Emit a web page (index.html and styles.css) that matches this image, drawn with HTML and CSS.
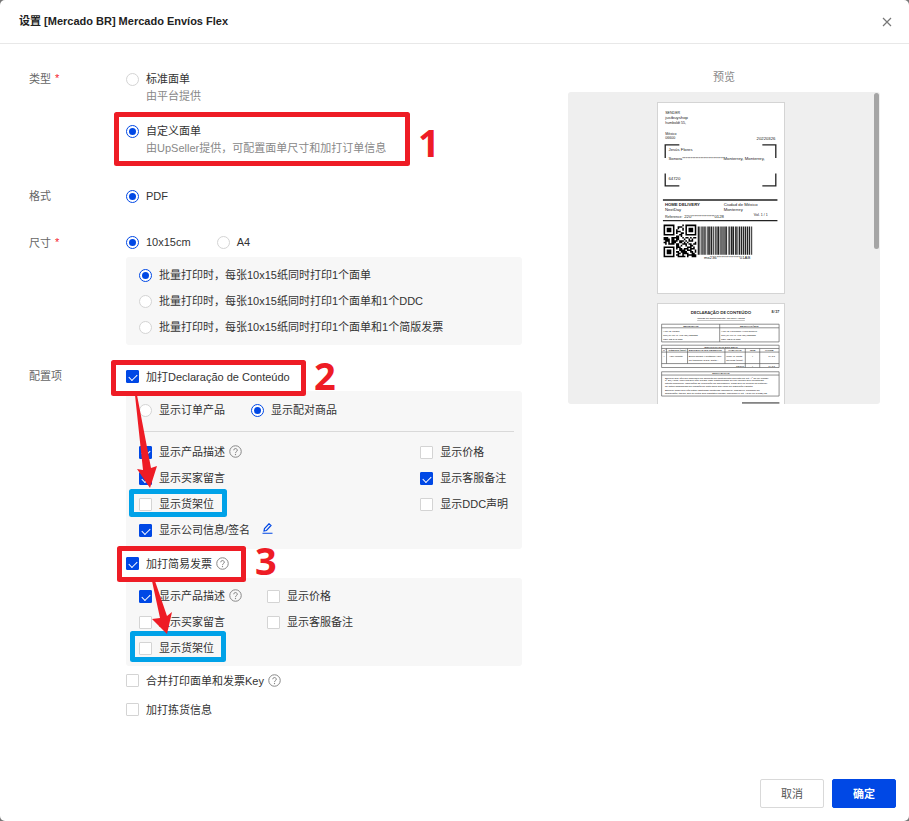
FILE: index.html
```html
<!DOCTYPE html>
<html lang="zh-CN">
<head>
    <meta charset="UTF-8">
    <meta name="viewport" content="width=device-width, initial-scale=1.0">
    <title>设置 [Mercado BR] Mercado Envíos Flex</title>
    <link rel="stylesheet" href="styles.css">
</head>
<body>
    <!-- Shared icons -->
    <svg class="icon-defs" aria-hidden="true">
        <symbol id="icon-help" viewBox="0 0 26 26">
            <circle cx="13" cy="13" r="11.5" fill="none" stroke="#888" stroke-width="2"/>
            <path d="M9.5 10.5a3.5 3.5 0 1 1 5 3.2c-1 .5-1.5 1-1.5 2.300" fill="none" stroke="#888" stroke-width="2"/>
            <circle cx="13" cy="19" r="1.300" fill="#888"/>
        </symbol>
    </svg>

    <div class="dialog">
        <header class="dialog-header">
            <h1>设置 [Mercado BR] Mercado Envíos Flex</h1>
            <button type="button" class="close-button" aria-label="关闭">
                <svg viewBox="0 0 10 10" width="10" height="10"><path d="M1 1l8 8M9 1L1 9" stroke="#777" stroke-width="1.200" fill="none"/></svg>
            </button>
        </header>

        <div class="dialog-body">
            <form class="settings" id="settings">
                <div class="field">
                    <div class="field-label field-label-type">类型<span class="required">*</span></div>
                    <div class="field-content">
                        <label class="type-option">
                            <input type="radio" name="type">
                            <span><span class="type-name">标准面单</span><span class="type-hint">由平台提供</span></span>
                        </label>
                        <label class="type-option">
                            <input type="radio" name="type" checked>
                            <span><span class="type-name">自定义面单</span><span class="type-hint">由UpSeller提供，可配置面单尺寸和加打订单信息</span></span>
                        </label>
                    </div>
                </div>

                <div class="field">
                    <div class="field-label">格式</div>
                    <div class="field-content">
                        <div class="row"><label class="option"><input type="radio" name="format" checked>PDF</label></div>
                    </div>
                </div>

                <div class="field">
                    <div class="field-label">尺寸<span class="required">*</span></div>
                    <div class="field-content">
                        <div class="row">
                            <label class="option"><input type="radio" name="size" checked>10x15cm</label>
                            <label class="option"><input type="radio" name="size">A4</label>
                        </div>
                        <div class="panel">
                            <label class="option"><input type="radio" name="batch" checked>批量打印时，每张10x15纸同时打印1个面单</label>
                            <label class="option"><input type="radio" name="batch">批量打印时，每张10x15纸同时打印1个面单和1个DDC</label>
                            <label class="option"><input type="radio" name="batch">批量打印时，每张10x15纸同时打印1个面单和1个简版发票</label>
                        </div>
                    </div>
                </div>

                <div class="field">
                    <div class="field-label">配置项</div>
                    <div class="field-content">
                        <div class="row"><label class="option"><input type="checkbox" checked>加打Declaração de Conteúdo</label></div>
                        <div class="panel panel-ddc">
                            <div class="source">
                                <label class="option"><input type="radio" name="source">显示订单产品</label>
                                <label class="option"><input type="radio" name="source" checked>显示配对商品</label>
                            </div>
                            <div class="checks checks-wide">
                                <div class="check"><label class="option"><input type="checkbox" checked>显示产品描述</label><svg class="help"><use href="#icon-help"/></svg></div>
                                <div class="check"><label class="option"><input type="checkbox">显示价格</label></div>
                                <div class="check"><label class="option"><input type="checkbox" checked>显示买家留言</label></div>
                                <div class="check"><label class="option"><input type="checkbox" checked>显示客服备注</label></div>
                                <div class="check"><label class="option"><input type="checkbox">显示货架位</label></div>
                                <div class="check"><label class="option"><input type="checkbox">显示DDC声明</label></div>
                                <div class="check">
                                    <label class="option"><input type="checkbox" checked>显示公司信息/签名</label>
                                    <button type="button" class="edit-button" aria-label="编辑">
                                        <svg viewBox="0 0 22 22" width="11" height="11"><path d="M1 20.500h20M4 16l1-5L14 1.500l4 3.500L9 15z" fill="none" stroke="#0048e5" stroke-width="2.400"/></svg>
                                    </button>
                                </div>
                            </div>
                        </div>

                        <div class="row check"><label class="option"><input type="checkbox" checked>加打简易发票</label><svg class="help"><use href="#icon-help"/></svg></div>
                        <div class="panel">
                            <div class="checks checks-narrow">
                                <div class="check"><label class="option"><input type="checkbox" checked>显示产品描述</label><svg class="help"><use href="#icon-help"/></svg></div>
                                <div class="check"><label class="option"><input type="checkbox">显示价格</label></div>
                                <div class="check"><label class="option"><input type="checkbox">显示买家留言</label></div>
                                <div class="check"><label class="option"><input type="checkbox">显示客服备注</label></div>
                                <div class="check"><label class="option"><input type="checkbox">显示货架位</label></div>
                            </div>
                        </div>

                        <div class="row check"><label class="option"><input type="checkbox">合并打印面单和发票Key</label><svg class="help"><use href="#icon-help"/></svg></div>
                        <div class="row"><label class="option"><input type="checkbox">加打拣货信息</label></div>
                    </div>
                </div>
            </form>

            <aside class="preview">
                <h2>预览</h2>
                <div class="preview-box">
                    <div class="preview-pages">
                        <!-- Shipping label -->
                        <svg class="page" viewBox="0 0 384 576">
                            <g font-size="13">
                                <text x="22" y="31" font-size="11">SENDER</text>
                                <text x="22" y="46">justbuyshop</text>
                                <text x="22" y="62" font-size="11">humboldt 55,</text>
                                <text x="22" y="95" font-size="11">México</text>
                                <text x="22" y="108" font-size="11">06600</text>
                                <text x="358" y="110" text-anchor="end">20220326</text>
                                <text x="32" y="145">Jesús Flores</text>
                                <text x="32" y="171">Sonora*************************Monterrey, Monterrey,</text>
                                <text x="32" y="233">64720</text>
                                <text x="21" y="311" font-weight="bold">HOME DELIVERY</text>
                                <text x="200" y="311">Ciudad de México</text>
                                <text x="21" y="328">NextDay</text>
                                <text x="200" y="328">Monterrey</text>
                                <text x="21" y="348" font-size="11">Reference:</text>
                                <text x="80" y="348">220**************0128</text>
                                <text x="292" y="344" font-size="11">Vol. 1 / 1</text>
                                <text x="140" y="475">mx236**************01AB</text>
                            </g>
                            <path d="M65 126H22v40M318 126h41v40M22 213v38h43M359 213v38h-41" fill="none" stroke="#222" stroke-width="4"/>
                            <path d="M15 294h349M15 357h349" stroke="#222" stroke-width="4"/>
                            <path id="qr" fill="#000"/>
                            <path id="barcode" fill="#222"/>
                        </svg>

                        <!-- Content declaration -->
                        <svg class="page page-declaration" viewBox="0 0 384 576">
                            <path d="M11 60h358v54H11zM11 71h358M188 60v54M11 124h358v68H11zM11 134h358M11 145h358M11 180h358M26 134v46M90 134v46M204 134v46M266 134v58M310 134v58M11 205h358v74H11zM11 215h358" fill="none" stroke="#555" stroke-width="2"/>
                            <g font-size="8" font-weight="bold">
                                <text x="192" y="29" font-size="13" text-anchor="middle">DECLARAÇÃO DE CONTEÚDO</text>
                                <text x="346" y="26" font-size="11">8/37</text>
                                <text x="100" y="69" text-anchor="middle">REMETENTE</text>
                                <text x="278" y="69" text-anchor="middle">DESTINATÁRIO</text>
                                <text x="192" y="132" text-anchor="middle">IDENTIFICAÇÃO DOS BENS</text>
                                <text x="15" y="143">Nº</text>
                                <text x="32" y="143">CÓDIGO (SKU)</text>
                                <text x="94" y="143">DESCRIÇÃO DO PRODUTO</text>
                                <text x="214" y="143">VARIAÇÃO</text>
                                <text x="280" y="143">QTD</text>
                                <text x="326" y="143">VALOR</text>
                                <text x="238" y="190">TOTAL</text>
                                <text x="192" y="213" text-anchor="middle">DECLARAÇÃO</text>
                            </g>
                            <g font-size="8">
                                <text x="192" y="45" text-anchor="middle" text-decoration="underline">Código de Rastreamento: 701825110698</text>
                                <text x="15" y="84">NOME: Sergio</text>
                                <text x="15" y="95">CPF/CNPJ: 5.123456/789000</text>
                                <text x="15" y="107">CEP: 08 010 000</text>
                                <text x="192" y="84">NOME: Fernanda Alves Teixeira</text>
                                <text x="192" y="95">CPF/CNPJ: 5.123456/789000</text>
                                <text x="192" y="107">CEP: 08 010 000</text>
                                <text x="16" y="160">1</text>
                                <text x="34" y="160">Azul infantil</text>
                                <text x="94" y="160">Blusa Tecido Moletinho Adul</text>
                                <text x="94" y="171">no tamanho G,GG, preta...</text>
                                <text x="208" y="160">COR: G, preto</text>
                                <text x="208" y="171">Rayland (Cont)</text>
                                <text x="286" y="160">1</text>
                                <text x="336" y="160">21,99</text>
                                <text x="286" y="190">1</text>
                                <text x="336" y="190">21,99</text>
                                <text x="21" y="226">Declaro que não me enquadro no conceito de contribuinte previsto no art. 4º da Lei Compl.</text>
                                <text x="21" y="234">nº 87/1996, uma vez que não realizo, com habitualidade ou em volume que caracterize</text>
                                <text x="21" y="242">intuito comercial, operações de circulação de mercadoria, ainda que se iniciem no exterior,</text>
                                <text x="21" y="250">ou estou dispensado da emissão da nota fiscal por força da legislação vigente.</text>
                                <text x="21" y="263">Declaro ainda que não estou postando conteúdo inflamável, explosivo, causador de</text>
                                <text x="21" y="272">combustão, tóxico, gás ou outro que constitua perigo, conforme o art. 13 da Lei 6.538/78.</text>
                            </g>
                            <path d="M256 300h114" stroke="#222" stroke-width="3"/>
                        </svg>
                    </div>
                    <div class="scroll-thumb"></div>
                </div>
            </aside>
        </div>

        <footer class="dialog-footer">
            <button type="button" class="button">取消</button>
            <button type="submit" form="settings" class="button button-primary">确定</button>
        </footer>

        <!-- Step callouts drawn over the form -->
        <svg class="callouts" width="460" height="700" aria-hidden="true">
            <g fill="none" stroke="#ee1c25" stroke-width="5" stroke-linejoin="round">
                <rect x="116.500" y="114.500" width="291" height="49"/>
                <rect x="113.500" y="362.500" width="190" height="31"/>
                <rect x="119.500" y="548.500" width="124" height="31"/>
            </g>
            <g fill="none" stroke="#00a2e8" stroke-width="5" stroke-linejoin="round">
                <rect x="131.500" y="491.500" width="93" height="23"/>
                <rect x="132.500" y="633.500" width="91" height="26"/>
            </g>
            <path d="M135 395h2l14 73 6-2-7 22-13-19 6 1z" fill="#ee1c25"/>
            <path d="M152 581h3l12 35 5-4-5 22-15-15 8-1z" fill="#ee1c25"/>
            <g class="step">
                <text x="418" y="157">1</text>
                <text x="314" y="390">2</text>
                <text x="255" y="575">3</text>
            </g>
        </svg>
    </div>

    <script src="codes.js"></script>
</body>
</html>
```
FILE: styles.css
```css
* {
    box-sizing: border-box;
}

body {
    margin: 0;
    background: #777;
    color: #333;
    font-family: "Liberation Sans", "Noto Sans CJK SC", sans-serif;
    font-size: 11px;
}

button,
input {
    font: inherit;
    margin: 0;
}

.icon-defs {
    position: absolute;
    width: 0;
    height: 0;
}

.dialog {
    position: relative;
    display: flex;
    flex-direction: column;
    min-height: 100vh;
    background: #fff;
    border-radius: 5px;
}

.dialog-header {
    display: flex;
    align-items: center;
    justify-content: space-between;
    height: 44px;
    padding: 0 17px 0 19px;
    border-bottom: 1px solid #e8e8e8;
}

.dialog-header h1 {
    margin: 0;
    padding-bottom: 3px;
    font-size: 11px;
    font-weight: bold;
    color: #222;
}

.close-button,
.edit-button {
    display: flex;
    padding: 0;
    border: none;
    background: none;
    cursor: pointer;
}

.dialog-body {
    flex: 1;
    display: flex;
    align-items: flex-start;
    gap: 46px;
    padding: 17px 29px;
}

/* Form */
.settings {
    flex: 1;
    min-width: 0;
    display: flex;
    flex-direction: column;
    gap: 17px;
}

.field {
    display: flex;
}

.field-label {
    width: 97px;
    flex-shrink: 0;
    line-height: 29px;
    color: #666;
}

.field-label-type {
    padding-top: 3px;
}

.required {
    margin-left: 4px;
    color: #f5222d;
    vertical-align: 1px;
}

.field-content {
    flex: 1;
    min-width: 0;
}

.row {
    display: flex;
    gap: 26px;
    height: 29px;
    align-items: center;
}

.option {
    display: flex;
    align-items: center;
    gap: 7px;
    height: 26px;
    padding-bottom: 2px;
    cursor: pointer;
}

.option input {
    margin-top: 2px;
}

.type-option {
    display: flex;
    gap: 7px;
    padding: 10px 0 8px;
    line-height: 17px;
}

.type-option input {
    margin-top: 2px;
}

.type-name,
.type-hint {
    display: block;
}

.type-hint {
    color: #888;
}

input[type="radio"],
input[type="checkbox"] {
    appearance: none;
    display: grid;
    place-items: center;
    flex-shrink: 0;
    width: 13px;
    height: 13px;
    border: 1px solid #d4d4d4;
    border-radius: 1px;
    background: #fff;
}

input[type="radio"] {
    border-radius: 50%;
}

input[type="radio"]:checked {
    border-color: #0048e5;
}

input[type="radio"]:checked::after {
    content: "";
    width: 7px;
    height: 7px;
    border-radius: 50%;
    background: #0048e5;
}

input[type="checkbox"]:checked {
    border-color: #0048e5;
    background: #0048e5;
}

input[type="checkbox"]:checked::after {
    content: "";
    width: 7px;
    height: 4px;
    border-left: 1px solid #fff;
    border-bottom: 1px solid #fff;
    transform: rotate(-45deg);
}

.panel {
    padding: 5px 8px 5px 13px;
    border-radius: 3px;
    background: #f7f7f7;
}

.panel-ddc {
    padding-top: 6px;
    padding-bottom: 6px;
}

.source {
    display: flex;
    gap: 26px;
    padding-bottom: 8px;
    margin-bottom: 7px;
    border-bottom: 1px solid #d9d9d9;
}

.checks {
    display: grid;
}

.checks-wide {
    grid-template-columns: 3fr 1fr;
}

.checks-narrow {
    grid-template-columns: 128px 1fr;
}

.check {
    display: flex;
    align-items: center;
    gap: 4px;
    white-space: nowrap;
}

.help {
    width: 13px;
    height: 13px;
    margin-bottom: 1px;
}

.edit-button {
    margin: 0 0 3px 8px;
}

/* Preview */
.preview {
    width: 312px;
    flex-shrink: 0;
}

.preview h2 {
    margin: 0;
    padding-top: 2px;
    font-size: 11px;
    font-weight: normal;
    line-height: 29px;
    text-align: center;
    color: #888;
}

.preview-box {
    position: relative;
    aspect-ratio: 1;
    overflow: hidden;
    border-radius: 3px;
    background: #efefef;
}

.preview-pages {
    display: flex;
    flex-direction: column;
    align-items: center;
    gap: 9px;
    padding: 10px 6px 0 0;
}

.page {
    width: 128px;
    height: 192px;
    border: 1px solid #d4d4d4;
    background: #fff;
    fill: #222;
}

.page-declaration {
    font-family: Lato, sans-serif;
}

.scroll-thumb {
    position: absolute;
    top: 1px;
    right: 1px;
    width: 5px;
    height: 50%;
    border-radius: 3px;
    background: #a5a5a5;
}

/* Footer */
.dialog-footer {
    display: flex;
    justify-content: flex-end;
    gap: 8px;
    padding: 13px;
}

.button {
    width: 64px;
    height: 29px;
    padding: 0 0 2px;
    border: 1px solid #d9d9d9;
    border-radius: 2px;
    background: #fff;
    color: #555;
    cursor: pointer;
}

.button-primary {
    border-color: #0048e5;
    background: #0048e5;
    color: #fff;
    font-weight: bold;
}

/* Callouts */
.callouts {
    position: absolute;
    top: 0;
    left: 0;
    pointer-events: none;
}

.step {
    fill: #ee1c25;
    font-family: "Noto Sans", "Open Sans", sans-serif;
    font-size: 38px;
    font-weight: 700;
}
```
FILE: codes.js
```js
// Draws the sample QR code and barcode of the shipping label
const MODULE = 4.75;
let seed = 11;

function random() {
    seed = (seed * 16807) % 2147483647;
    return seed / 2147483647;
}

// Finder squares in three corners, null elsewhere
function finder(col, row) {
    for (const [x, y] of [[0, 0], [14, 0], [0, 14]]) {
        const d = Math.max(Math.abs(col - x - 3), Math.abs(row - y - 3));
        if (d <= 4) return d !== 2 && d !== 4;
    }
    return null;
}

let qr = '';
for (let row = 0; row < 21; row++) {
    for (let col = 0; col < 21; col++) {
        const fixed = finder(col, row);
        if (fixed === null ? random() > 0.45 : fixed) {
            qr += `M${17 + col * MODULE} ${369 + row * MODULE}h${MODULE}v${MODULE}h-${MODULE}z`;
        }
    }
}
document.getElementById('qr').setAttribute('d', qr);

let bars = '';
let x = 121;
while (x < 288) {
    const width = 2 + Math.floor(random() * 4);
    bars += `M${x} 375h${width}v86h-${width}z`;
    x += width + 1 + Math.floor(random() * 3);
}
document.getElementById('barcode').setAttribute('d', bars);
```
